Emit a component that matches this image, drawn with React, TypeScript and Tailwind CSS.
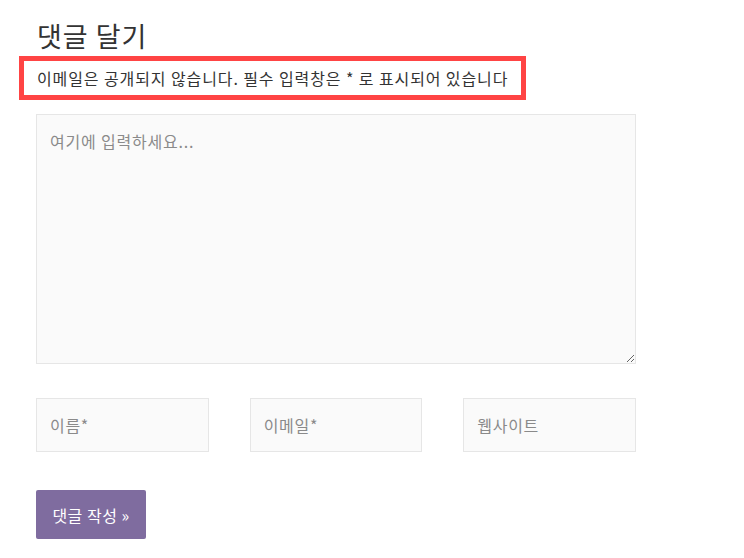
import React from "react";

export default function App() {
  const font = { fontFamily: '"Noto Sans CJK KR", "Noto Sans", sans-serif' };
  return (
    <div className="min-h-[558px] w-[744px] bg-white" style={font}>
      <div className="pl-[36px] pt-[17px]">
        <h3 className="text-[27px] leading-[38px] tracking-[1px] text-[#333333] pl-[1px]">댓글 달기</h3>
        <p className="mt-[6px] -ml-[12px] inline-block px-[13px] py-[5px] text-[16px] leading-[24px] tracking-[0.9px] text-[#333333] outline outline-[5px] outline-[#ff4444]">
          이메일은 공개되지 않습니다. 필수 입력창은 * 로 표시되어 있습니다
        </p>
        <form className="mt-[19px] w-[600px]" onSubmit={(e) => e.preventDefault()}>
          <textarea
            placeholder="여기에 입력하세요..."
            className="block h-[250px] w-[600px] border border-[#e6e6e6] bg-[#fafafa] px-[13px] py-[13px] text-[16px] leading-[26px] tracking-[0.8px] text-[#333] placeholder:text-[#8a8a8a] outline-none"
            style={font}
          />
          <div className="mt-[34px] grid grid-cols-3 gap-[41px]">
            {["이름*", "이메일*", "웹사이트"].map((p) => (
              <input
                key={p}
                placeholder={p}
                className="h-[54px] w-full border border-[#e6e6e6] bg-[#fafafa] px-[13px] text-[16px] tracking-[0.7px] text-[#333] placeholder:text-[#8a8a8a] outline-none"
                style={font}
              />
            ))}
          </div>
          <button
            type="submit"
            className="mt-[38px] h-[49px] w-[110px] rounded-[2px] bg-[#7f6c9f] text-[16px] tracking-[0.5px] text-white"
            style={font}
          >
            댓글 작성 »
          </button>
        </form>
      </div>
    </div>
  );
}
